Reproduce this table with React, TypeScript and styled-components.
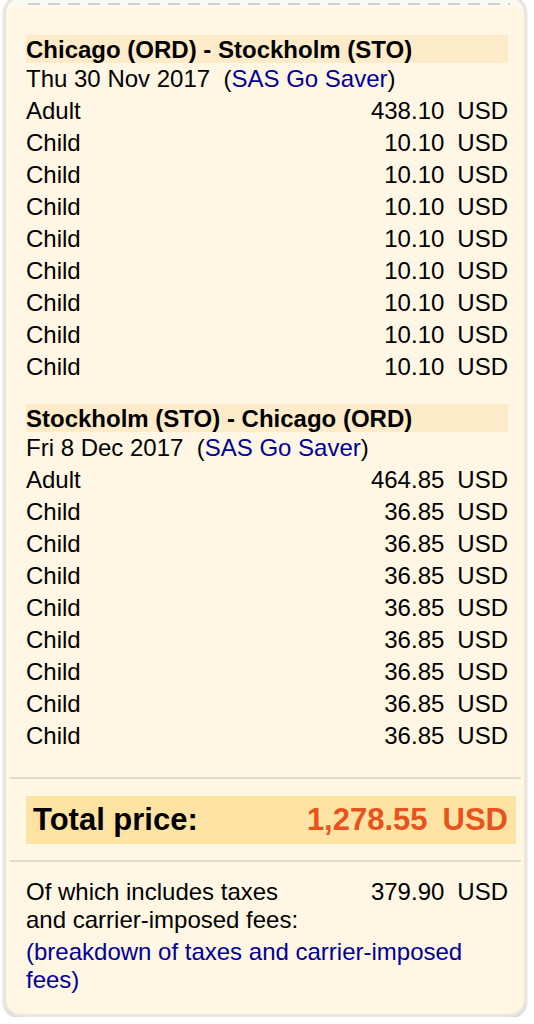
import React from "react";
import styled, { createGlobalStyle } from "styled-components";

const Global = createGlobalStyle`
  html, body { margin: 0; padding: 0; background: #ffffff; }
  body { font-family: "Liberation Sans", Arial, Helvetica, sans-serif; color: #000; }
`;

const Frame = styled.div`
  margin: -5px 7px 0 3px;
  border: 3px solid #ebe6dc;
  border-radius: 18px;
  background: #fbf9f4;
  box-shadow: 0 2px 2px rgba(0, 0, 0, 0.18);
  overflow: hidden;
`;

const TornStrip = styled.div`
  height: 8px;
  padding: 5px 14px 0 22px;
  box-sizing: border-box;
`;

const Dashes = styled.div`
  height: 2px;
  background: repeating-linear-gradient(to right, #cfcfcf 0 12px, transparent 12px 20px);
`;

const Panel = styled.div`
  background: #fff6e3;
  border-radius: 10px 10px 14px 14px;
  padding: 29px 0 20px 0;
`;

const Content = styled.div`
  padding: 0 16px 0 20px;
`;

const Leg = styled.section`
  margin-bottom: 21px;
  &:last-of-type { margin-bottom: 0; }
`;

const LegHeader = styled.div`
  background: #feebc9;
  font-weight: bold;
  font-size: 24px;
  line-height: 29px;
  height: 28px;
`;

const Line = styled.div`
  font-size: 24px;
  line-height: 32px;
`;

const Link = styled.a`
  color: #000096;
  text-decoration: none;
`;

const Row = styled.div`
  display: flex;
  justify-content: space-between;
  font-size: 24px;
  line-height: 32px;
`;

const Money = styled.span`
  display: flex;
  gap: 13px;
`;

const Separator = styled.hr<{ $top: number; $bottom: number }>`
  border: 0;
  height: 2px;
  background: #e4dccb;
  margin: ${(p) => p.$top}px 3px ${(p) => p.$bottom}px 4px;
`;

const TotalBar = styled.div`
  margin: 0 8px 0 20px;
  background: #ffe3a3;
  height: 48px;
  display: flex;
  align-items: center;
  justify-content: space-between;
  padding: 0 8px 0 7px;
  font-size: 31px;
  font-weight: bold;
`;

const TotalAmount = styled.span`
  color: #e8531d;
  display: flex;
  gap: 15px;
`;

const TaxRow = styled.div`
  display: flex;
  justify-content: space-between;
  align-items: flex-start;
  font-size: 24px;
  line-height: 28px;
`;

const TaxLabel = styled.div`
  width: 285px;
`;

const Breakdown = styled.div`
  font-size: 24px;
  line-height: 28px;
  margin-top: 4px;
`;

type LegData = { route: string; date: string; adult: string; child: string };

const legs: LegData[] = [
  { route: "Chicago (ORD) - Stockholm (STO)", date: "Thu 30 Nov 2017", adult: "438.10", child: "10.10" },
  { route: "Stockholm (STO) - Chicago (ORD)", date: "Fri 8 Dec 2017", adult: "464.85", child: "36.85" },
];

const PriceLine = ({ label, amount }: { label: string; amount: string }) => (
  <Row>
    <span>{label}</span>
    <Money>
      <span>{amount}</span>
      <span>USD</span>
    </Money>
  </Row>
);

export default function App() {
  return (
    <>
      <Global />
      <Frame>
        <TornStrip>
          <Dashes />
        </TornStrip>
        <Panel>
          <Content>
            {legs.map((leg) => (
              <Leg key={leg.route}>
                <LegHeader>{leg.route}</LegHeader>
                <Line>
                  {leg.date}&nbsp; (<Link href="#">SAS Go Saver</Link>)
                </Line>
                <PriceLine label="Adult" amount={leg.adult} />
                {Array.from({ length: 8 }).map((_, i) => (
                  <PriceLine key={i} label="Child" amount={leg.child} />
                ))}
              </Leg>
            ))}
          </Content>
          <Separator $top={25} $bottom={17} />
          <TotalBar>
            <span>Total price:</span>
            <TotalAmount>
              <span>1,278.55</span>
              <span>USD</span>
            </TotalAmount>
          </TotalBar>
          <Separator $top={16} $bottom={16} />
          <Content>
            <TaxRow>
              <TaxLabel>Of which includes taxes and carrier-imposed fees:</TaxLabel>
              <Money>
                <span>379.90</span>
                <span>USD</span>
              </Money>
            </TaxRow>
            <Breakdown>
              <Link href="#">(breakdown of taxes and carrier-imposed fees)</Link>
            </Breakdown>
          </Content>
        </Panel>
      </Frame>
    </>
  );
}
